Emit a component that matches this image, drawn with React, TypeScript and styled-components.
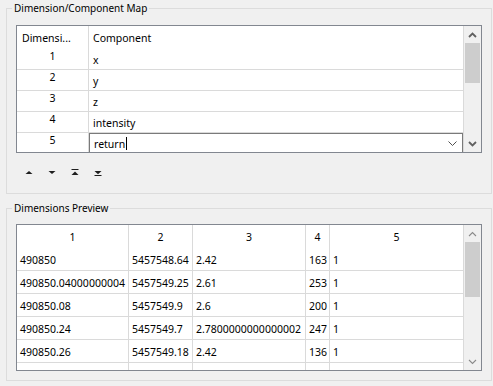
import React from "react";
import styled, { createGlobalStyle } from "styled-components";

const GlobalStyle = createGlobalStyle`
  html, body { margin: 0; padding: 0; background: #f0f0f0; }
  body {
    font-family: "Noto Sans", "Open Sans", sans-serif;
    font-size: 10.5px;
    color: #000;
  }
`;

const Window = styled.div`
  box-sizing: border-box;
  width: 493px;
  height: 386px;
  padding: 1px 1px 0 6px;
  display: flex;
  flex-direction: column;
  gap: 7px;
  overflow: hidden;
`;

const Group = styled.fieldset<{ $pt: number; $pb: number }>`
  margin: 0;
  min-width: 0;
  border: 1px solid #dcdcdc;
  padding: ${(p) => p.$pt}px 9px ${(p) => p.$pb}px 9px;
`;

const Legend = styled.legend`
  margin-left: -4px;
  padding: 0 2px;
  line-height: 14px;
  font-size: 10px;
`;

const Table = styled.div<{ $h: number }>`
  box-sizing: border-box;
  height: ${(p) => p.$h}px;
  border: 1px solid #828790;
  background: #fff;
  display: flex;
  overflow: hidden;
`;

const Viewport = styled.div`
  flex: 1;
  min-width: 0;
  overflow: hidden;
  display: flex;
  flex-direction: column;
`;

const Row = styled.div<{ $cols: string; $h: number; $line?: boolean }>`
  flex: none;
  box-sizing: border-box;
  display: grid;
  grid-template-columns: ${(p) => p.$cols};
  height: ${(p) => p.$h}px;
  border-bottom: ${(p) => (p.$line ? "1px solid #dadada" : "none")};
`;

type Align = "left" | "center" | "right";

const Cell = styled.div<{ $align?: Align; $px?: number; $pt?: number; $pb?: number }>`
  box-sizing: border-box;
  min-width: 0;
  border-right: 1px solid #dadada;
  display: flex;
  align-items: center;
  justify-content: ${(p) =>
    p.$align === "center" ? "center" : p.$align === "right" ? "flex-end" : "flex-start"};
  padding: ${(p) => p.$pt ?? 0}px ${(p) => p.$px ?? 3}px ${(p) => p.$pb ?? 0}px;
  white-space: nowrap;
  overflow: hidden;
`;

const EditorCell = styled.div`
  box-sizing: border-box;
  border-right: 1px solid #dadada;
  display: flex;
  min-width: 0;
`;

const Editor = styled.div`
  box-sizing: border-box;
  flex: 1;
  height: 20px;
  border: 1px solid #7a7a7a;
  background: #fff;
  display: flex;
  align-items: center;
  padding: 1px 5px 0 4px;
`;

const Caret = styled.span`
  display: inline-block;
  width: 1px;
  height: 13px;
  background: #000;
  margin-left: 1px;
`;

const EditorArrow = styled.span`
  margin-left: auto;
  display: flex;
`;

const ScrollBar = styled.div`
  flex: none;
  width: 17px;
  background: #f0f0f0;
  display: flex;
  flex-direction: column;
`;

const ScrollArrow = styled.div`
  flex: none;
  height: 17px;
  display: flex;
  align-items: center;
  justify-content: center;
`;

const Track = styled.div`
  flex: 1;
  padding: 0 1px;
`;

const Thumb = styled.div<{ $h: number }>`
  height: ${(p) => p.$h}px;
  background: #cdcdcd;
`;

const Toolbar = styled.div`
  display: flex;
  margin-top: 7px;
  height: 24px;
  padding-left: 1px;
`;

const ToolButton = styled.button`
  width: 23px;
  height: 24px;
  border: none;
  background: transparent;
  padding: 0;
  display: flex;
  align-items: center;
  justify-content: center;
`;

const Chevron = ({ up, bold }: { up?: boolean; bold?: boolean }) => (
  <svg width="9" height="6" viewBox="0 0 9 6">
    <polyline
      points={up ? "1,5 4.5,1.5 8,5" : "1,1 4.5,4.5 8,1"}
      fill="none"
      stroke={bold ? "#606060" : "#8a8a8a"}
      strokeWidth={bold ? 1.8 : 1.1}
    />
  </svg>
);

const ComboChevron = () => (
  <svg width="9" height="5" viewBox="0 0 9 5">
    <polyline points="0.5,0.5 4.5,4.5 8.5,0.5" fill="none" stroke="#505050" strokeWidth="1" />
  </svg>
);

const MoveIcon = ({ kind }: { kind: "up" | "down" | "top" | "bottom" }) => (
  <svg width="8" height="7" viewBox="0 0 8 7">
    {kind === "up" && <polygon points="0.5,5 7.5,5 4,2" fill="#1e1e1e" />}
    {kind === "down" && <polygon points="0.5,2 7.5,2 4,5" fill="#1e1e1e" />}
    {kind === "top" && (
      <>
        <rect x="0.5" y="0" width="7" height="1" fill="#1e1e1e" />
        <polygon points="0.5,6 7.5,6 4,2.5" fill="#1e1e1e" />
      </>
    )}
    {kind === "bottom" && (
      <>
        <polygon points="0.5,2 7.5,2 4,5.3" fill="#1e1e1e" />
        <rect x="0.5" y="6" width="7" height="1" fill="#1e1e1e" />
      </>
    )}
  </svg>
);

const MAP_COLS = "72px 375px";
const mapRows = ["x", "y", "z", "intensity"];

const PREV_COLS = "112px 64px 113px 24px 134px";
const previewRows: string[][] = [
  ["490850", "5457548.64", "2.42", "163", "1"],
  ["490850.04000000004", "5457549.25", "2.61", "253", "1"],
  ["490850.08", "5457549.9", "2.6", "200", "1"],
  ["490850.24", "5457549.7", "2.7800000000000002", "247", "1"],
  ["490850.26", "5457549.18", "2.42", "136", "1"],
];
const previewAlign: Align[] = ["left", "left", "left", "right", "left"];

export default function App() {
  return (
    <>
      <GlobalStyle />
      <Window>
        <Group $pt={10} $pb={9}>
          <Legend>Dimension/Component Map</Legend>
          <Table $h={128}>
            <Viewport>
              <Row $cols={MAP_COLS} $h={23}>
                <Cell $px={5}>Dimensi...</Cell>
                <Cell $px={4}>Component</Cell>
              </Row>
              {mapRows.map((c, i) => (
                <Row key={c} $cols={MAP_COLS} $h={21} $line>
                  <Cell $align="center" $pb={6}>
                    {i + 1}
                  </Cell>
                  <Cell $px={4} $pt={2}>
                    {c}
                  </Cell>
                </Row>
              ))}
              <Row $cols={MAP_COLS} $h={20}>
                <Cell $align="center" $pb={6}>
                  5
                </Cell>
                <EditorCell>
                  <Editor>
                    <span>return</span>
                    <Caret />
                    <EditorArrow>
                      <ComboChevron />
                    </EditorArrow>
                  </Editor>
                </EditorCell>
              </Row>
            </Viewport>
            <ScrollBar>
              <ScrollArrow>
                <Chevron up bold />
              </ScrollArrow>
              <Track>
                <Thumb $h={40} />
              </Track>
              <ScrollArrow>
                <Chevron bold />
              </ScrollArrow>
            </ScrollBar>
          </Table>
          <Toolbar>
            <ToolButton aria-label="Move up">
              <MoveIcon kind="up" />
            </ToolButton>
            <ToolButton aria-label="Move down">
              <MoveIcon kind="down" />
            </ToolButton>
            <ToolButton aria-label="Move to top">
              <MoveIcon kind="top" />
            </ToolButton>
            <ToolButton aria-label="Move to bottom">
              <MoveIcon kind="bottom" />
            </ToolButton>
          </Toolbar>
        </Group>

        <Group $pt={9} $pb={9}>
          <Legend>Dimensions Preview</Legend>
          <Table $h={147}>
            <Viewport>
              <Row $cols={PREV_COLS} $h={23}>
                {["1", "2", "3", "4", "5"].map((h) => (
                  <Cell key={h} $align="center">
                    {h}
                  </Cell>
                ))}
              </Row>
              {previewRows.map((r, i) => (
                <Row key={i} $cols={PREV_COLS} $h={23} $line>
                  {r.map((v, j) => (
                    <Cell key={j} $align={previewAlign[j]} $px={j === 3 ? 2 : 3} $pt={2}>
                      {v}
                    </Cell>
                  ))}
                </Row>
              ))}
              <Row $cols={PREV_COLS} $h={23}>
                {previewAlign.map((a, j) => (
                  <Cell key={j} $align={a} />
                ))}
              </Row>
            </Viewport>
            <ScrollBar>
              <ScrollArrow>
                <Chevron up />
              </ScrollArrow>
              <Track>
                <Thumb $h={55} />
              </Track>
              <ScrollArrow>
                <Chevron />
              </ScrollArrow>
            </ScrollBar>
          </Table>
        </Group>
      </Window>
    </>
  );
}
